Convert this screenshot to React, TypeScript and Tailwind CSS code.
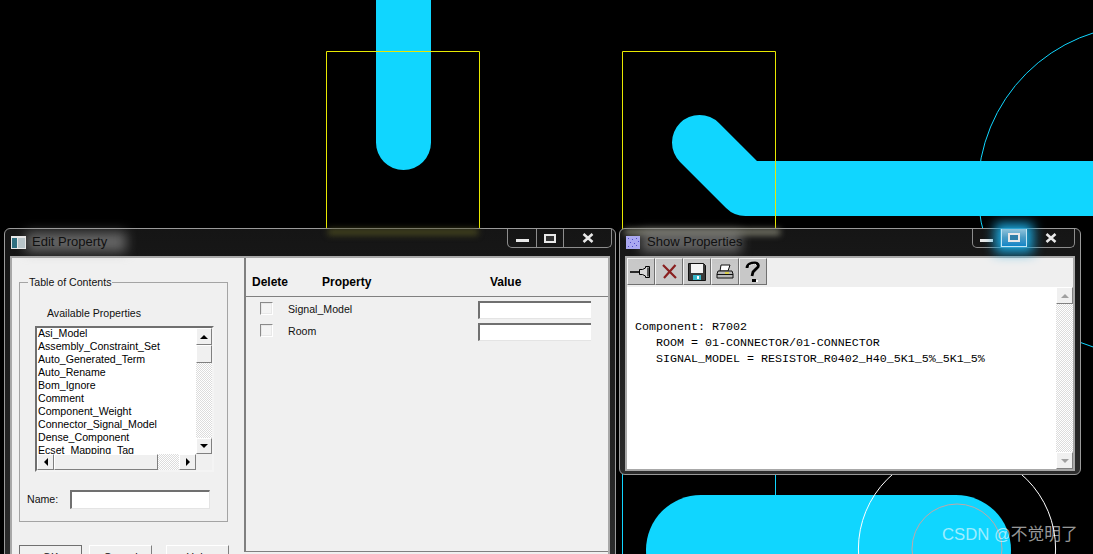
import React from 'react';

const raised = 'border border-t-white border-l-white border-r-[#808080] border-b-[#808080] bg-[#f0f0f0]';
const sunken = 'border border-t-[#707070] border-l-[#707070] border-r-[#e4e4e4] border-b-[#e4e4e4] bg-white';
const checker = 'bg-[repeating-conic-gradient(#dcdcdc_0_25%,#ffffff_0_50%)] bg-[length:2px_2px]';

const properties = [
  'Asi_Model',
  'Assembly_Constraint_Set',
  'Auto_Generated_Term',
  'Auto_Rename',
  'Bom_Ignore',
  'Comment',
  'Component_Weight',
  'Connector_Signal_Model',
  'Dense_Component',
  'Ecset_Mapping_Tag',
];

// Arrow inside a scrollbar button
const Arrow = ({ dir, color = '#000000' }: { dir: 'up' | 'down' | 'left' | 'right'; color?: string }) => {
  const points = { up: '4,0 0,4 8,4', down: '0,0 8,0 4,4', left: '4,0 4,8 0,4', right: '0,0 0,8 4,4' }[dir];
  const vertical = dir === 'up' || dir === 'down';
  return (
    <svg width={vertical ? 8 : 4} height={vertical ? 4 : 8}>
      <polygon points={points} fill={color} />
    </svg>
  );
};

const ScrollButton = ({ dir, className = '', color }: { dir: 'up' | 'down' | 'left' | 'right'; className?: string; color?: string }) => (
  <div className={`${raised} flex items-center justify-center shrink-0 ${className}`}>
    <Arrow dir={dir} color={color} />
  </div>
);

const CaptionButtons = ({ glow }: { glow?: boolean }) => (
  <div className="flex h-[19px] border border-t-0 border-[#8d8d8d] rounded-b-[5px]">
    <div className={`${glow ? 'w-[28px]' : 'w-[29px]'} flex items-center justify-center border-r border-[#8d8d8d]`}>
      <div className="w-[13px] h-[3px] mt-[4px] bg-[#e8e8e8]" />
    </div>
    {glow ? (
      <div className="relative w-[26px] flex items-center justify-center border border-t-0 border-[#bfe6f5] bg-gradient-to-b from-[#8fc4dc] via-[#4a9cc4] to-[#0a86c8] shadow-[0_0_12px_6px_#1ba6dc]">
        <div className="w-[12px] h-[9px] border-2 border-[#e8e8e8] bg-[#2f7fa8]" />
      </div>
    ) : (
      <div className="w-[27px] flex items-center justify-center border-r border-[#8d8d8d]">
        <div className="w-[12px] h-[9px] border-2 border-[#e8e8e8] bg-[#333333]" />
      </div>
    )}
    <div className="w-[47px] flex items-center justify-center">
      <svg width="12" height="10" viewBox="0 0 12 10">
        <path d="M1.5 1 L10.5 9 M10.5 1 L1.5 9" stroke="#e8e8e8" strokeWidth="2.6" />
      </svg>
    </div>
  </div>
);

const TitleBar = ({ title, icon, glow, haze, captionClass, titleClass }: { title: string; icon: React.ReactNode; glow?: boolean; haze: string; captionClass: string; titleClass: string }) => (
  <div className="relative flex h-[27px] shrink-0">
    <div className={`absolute top-0 h-[6px] blur-[3px] ${haze}`} />
    <div className="relative flex items-center pl-[1px] h-[26px]">
      <div className="absolute left-[16px] top-[3px] h-[20px] w-[100px] bg-[#9a9a9a]/60 blur-[6px]" />
      {icon}
      <span className={`relative text-[13px] text-[#101010] ${titleClass}`}>{title}</span>
    </div>
    <div className={`relative ml-auto ${captionClass}`}>
      <CaptionButtons glow={glow} />
    </div>
  </div>
);

const DialogButton = ({ label, isDefault, className = '' }: { label: string; isDefault?: boolean; className?: string }) => (
  <div
    className={`w-[63px] h-[24px] pt-[3px] text-center text-[11px] border ${
      isDefault
        ? 'border-[#707070] border-b-[#707070]'
        : 'border-t-white border-l-white border-r-[#808080] border-b-[#808080]'
    } ${className}`}
  >
    {label}
  </div>
);

const PropertyList = () => (
  <div className="ml-[15px] mt-[6px] w-[179px] h-[146px] border-2 border-t-[#707070] border-l-[#707070] border-r-[#f4f4f4] border-b-[#f4f4f4] grid grid-cols-[159px_16px] grid-rows-[126px_16px] bg-[#f0f0f0]">
    <div className="bg-white overflow-hidden pl-[1px] text-[10.6px] leading-[13px] text-black">
      <div className="-mt-px">
        {properties.map((name) => (
          <div key={name} className="h-[13px] whitespace-nowrap">{name}</div>
        ))}
      </div>
    </div>
    <div className="flex flex-col">
      <ScrollButton dir="up" className="h-[17px]" />
      <div className={`${raised} h-[18px] shrink-0`} />
      <div className={`flex-1 ${checker}`} />
      <ScrollButton dir="down" className="h-[16px]" />
    </div>
    <div className="flex">
      <ScrollButton dir="left" className="w-[17px]" />
      <div className={`${raised} w-[104px] shrink-0`} />
      <div className={`flex-1 ${checker}`} />
      <ScrollButton dir="right" className="w-[17px]" />
    </div>
    <div className="bg-[#f0f0f0]" />
  </div>
);

const PropertyRow = ({ label }: { label: string }) => (
  <div className="flex items-center h-[18px] mb-[4px]">
    <div className="ml-[14px] mb-[3px] w-[13px] h-[13px] border border-t-[#8a8a8a] border-l-[#8a8a8a] border-r-white border-b-white bg-[#f4f4f4] outline outline-1 -outline-offset-2 outline-[#e8e8e8]" />
    <span className="ml-[15px] w-[190px] text-[10.6px] text-[#111111]">{label}</span>
    <div className={`${sunken} border-t-2 border-l-2 border-r-0 w-[113px] h-[18px]`} />
  </div>
);

const EditProperty = () => (
  <div className="absolute left-[4px] top-[228px] w-[612px] h-[340px] flex flex-col px-[5px] border border-[#9a9a9a] rounded-t-[6px] bg-gradient-to-b from-[#151515] to-[#2c2c2c]">
    <TitleBar
      title="Edit Property"
      haze="left-[318px] w-[150px] bg-[#4a4a20]"
      captionClass="-mr-[2px]"
      titleClass="ml-[6px]"
      icon={
        <svg width="15" height="13" viewBox="0 0 15 13" className="relative">
          <rect width="15" height="13" fill="#e6e6e6" />
          <rect x="1" y="2" width="5" height="10" fill="#2f6f80" />
          <rect x="7" y="2" width="7" height="10" fill="#b8c4c8" />
        </svg>
      }
    />
    <div className="flex-1 flex border-2 border-[#a8a8a8] bg-[#f0f0f0] text-[#111111] overflow-hidden">
      <div className="w-[232px] shrink-0 pl-[7px] pt-[24px]">
        <div className="relative w-[209px] h-[240px] border border-[#a4a4a4]">
          <span className="absolute -top-[8px] left-[8px] px-[1px] bg-[#f0f0f0] text-[10.6px] leading-[14px]">Table of Contents</span>
          <div className="pl-[27px] pt-[23px] text-[10.6px] leading-[14px]">Available Properties</div>
          <PropertyList />
          <div className="flex items-center ml-[7px] mt-[18px]">
            <span className="w-[43px] text-[10.6px]">Name:</span>
            <div className={`${sunken} border-t-2 border-l-2 w-[140px] h-[19px]`} />
          </div>
        </div>
        <div className="flex mt-[23px]">
          <DialogButton label="OK" isDefault />
          <DialogButton label="Cancel" className="ml-[7px]" />
          <DialogButton label="Help" className="ml-[14px]" />
        </div>
      </div>
      <div className="w-[365px] h-[294px] border-l-2 border-b border-[#808080]">
        <div className="flex items-end h-[39px] pb-[5px] border-b border-[#808080] text-[12px] font-bold text-black">
          <span className="ml-[6px] w-[70px]">Delete</span>
          <span className="w-[168px]">Property</span>
          <span>Value</span>
        </div>
        <div className="pt-[4px]">
          <PropertyRow label="Signal_Model" />
          <PropertyRow label="Room" />
        </div>
      </div>
    </div>
  </div>
);

const ToolButton = ({ children }: { children: React.ReactNode }) => (
  <div className="w-[28px] h-[27px] flex items-center justify-center border border-t-[#f4f4f4] border-l-[#f4f4f4] border-r-[#707070] border-b-[#707070] bg-[#c8c8c8]">
    {children}
  </div>
);

const ShowProperties = () => (
  <div className="absolute left-[619px] top-[228px] w-[462px] h-[247px] flex flex-col px-[5px] pb-[3px] border border-[#9a9a9a] rounded-[6px] bg-gradient-to-b from-[#151515] to-[#2c2c2c]">
    <TitleBar
      title="Show Properties"
      glow
      haze="left-[0px] w-[155px] bg-[#808070]"
      captionClass=""
      titleClass="ml-[7px]"
      icon={
        <svg width="14" height="13" viewBox="0 0 14 13" className="relative">
          <rect width="14" height="13" fill="#aaa8f0" />
          <path d="M2 2h1v1H2zM6 3h1v1H6zM10 2h1v1h-1zM4 6h1v1H4zM8 7h1v1H8zM12 5h1v1h-1zM2 10h1v1H2zM6 10h1v1H6zM10 9h1v1h-1z" fill="#4e4ac8" />
        </svg>
      }
    />
    <div className="flex-1 flex flex-col border-2 border-[#a8a8a8] bg-white overflow-hidden">
      <div className="flex h-[29px] shrink-0 bg-[#efefef]">
        <ToolButton>
          <svg width="22" height="12" viewBox="0 0 22 12">
            <path d="M0 6h9" stroke="#000" strokeWidth="1.6" />
            <path d="M9.5 3.5v5h3l3 1.5 0 1.5h4V0.500h-4V2l-3 1.500z" fill="#d8d8d8" stroke="#000" strokeWidth="1" />
            <path d="M17 1.500h2v9h-2z" fill="#555" />
          </svg>
        </ToolButton>
        <ToolButton>
          <svg width="15" height="15" viewBox="0 0 15 15">
            <path d="M1 1 L14 14 M13.500 1 L2 14" stroke="#8a2020" strokeWidth="2.2" />
          </svg>
        </ToolButton>
        <ToolButton>
          <svg width="18" height="18" viewBox="0 0 18 18">
            <path d="M0.500 0.500h15l2 2v15H0.500z" fill="#3a3a3a" stroke="#111" />
            <rect x="3" y="1" width="12" height="9" fill="#f4f4f4" />
            <rect x="5" y="12" width="8" height="5" fill="#36b6c8" />
            <rect x="9" y="13" width="2" height="3" fill="#ffffff" />
          </svg>
        </ToolButton>
        <ToolButton>
          <svg width="18" height="16" viewBox="0 0 18 16">
            <path d="M5 1h9l-2 6H4z" fill="#fff" stroke="#111" />
            <path d="M2 7h14l1 3v4H1v-4z" fill="#b8b8b8" stroke="#111" />
            <path d="M1 10.500h16" stroke="#111" />
            <path d="M9 9h4" stroke="#e8d820" strokeWidth="1.4" />
          </svg>
        </ToolButton>
        <ToolButton>
          <svg width="16" height="22" viewBox="0 0 16 22">
            <path d="M2 7C2 3 6 2 10 2c3 0 4 2 3 4l-5 5-1 4" fill="none" stroke="#000" strokeWidth="2.8" />
            <path d="M4 5c2-1.500 5-2 7-1.500" fill="none" stroke="#f4f4f4" strokeWidth="1" />
            <path d="M7 18h4v3H7z" fill="#000" />
            <path d="M11 19h2v2h-2z" fill="#fff" />
          </svg>
        </ToolButton>
      </div>
      <div className="flex-1 flex min-h-0">
        <pre className="flex-1 pl-[8px] pt-[32px] font-['Liberation_Mono',monospace] text-[11.67px] leading-[16px] text-black">
          {'Component: R7002\n   ROOM = 01-CONNECTOR/01-CONNECTOR\n   SIGNAL_MODEL = RESISTOR_R0402_H40_5K1_5%_5K1_5%'}
        </pre>
        <div className="w-[17px] flex flex-col">
          <ScrollButton dir="up" color="#a0a0a0" className="h-[17px]" />
          <div className={`flex-1 ${checker}`} />
          <ScrollButton dir="down" color="#a0a0a0" className="h-[17px]" />
        </div>
      </div>
    </div>
  </div>
);

// PCB canvas behind the windows
const Board = () => (
  <svg width="1093" height="554" viewBox="0 0 1093 554" className="block">
    <rect width="1093" height="554" fill="#000000" />
    <path d="M403.500 -40V142.500" stroke="#10d6ff" strokeWidth="55" strokeLinecap="round" fill="none" />
    <path d="M699.500 142.500L745.500 188.500H1130" stroke="#10d6ff" strokeWidth="55" strokeLinecap="round" strokeLinejoin="round" fill="none" />
    <rect x="646" y="495" width="365" height="110" rx="55" fill="#10d6ff" />
    <path d="M326.500 235V51.500H479.500V235M622.500 235V51.500H775.500V235" stroke="#e8e800" strokeWidth="1" fill="none" />
    <path d="M622.500 470V554M775.500 470V495" stroke="#10d6ff" strokeWidth="1" />
    <circle cx="1142.700" cy="190" r="164.700" stroke="#10d6ff" strokeWidth="1" fill="none" />
    <circle cx="957" cy="549" r="98.600" stroke="#ffffff" strokeWidth="1" fill="none" />
    <circle cx="957" cy="549" r="45" stroke="#c0a8a8" strokeWidth="1" fill="none" />
  </svg>
);

const App: React.FC = () => (
  <div className="relative w-[1093px] h-[554px] overflow-hidden bg-black font-['Liberation_Sans',Arial,sans-serif]">
    <Board />
    <EditProperty />
    <ShowProperties />
    <span className="absolute left-[942px] top-[523px] text-[16.7px] leading-[24px] text-[#ffffff]/60 font-['Liberation_Sans','Noto_Sans_CJK_SC',sans-serif]">
      CSDN @不觉明了
    </span>
  </div>
);

export default App;
